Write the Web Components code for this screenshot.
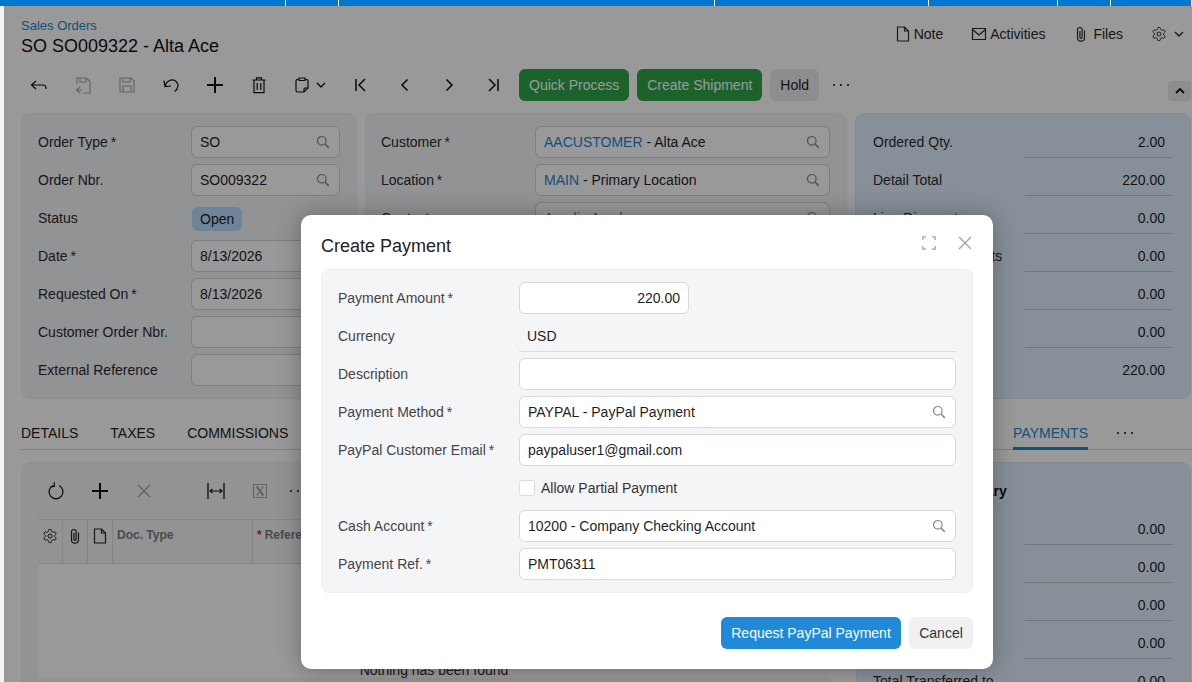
<!DOCTYPE html>
<html lang="en">
<head>
<meta charset="utf-8">
<title>Sales Orders</title>
<style>
    html, body { margin: 0; height: 100%; overflow: hidden; background: #fff; }
    body { font: 14px "Liberation Sans", Arial, sans-serif; color: #222; }
</style>
</head>
<body>
<sales-order-screen></sales-order-screen>
<script>
const ICONS = {
    search: [14, '<circle cx="5.8" cy="5.8" r="4.3"/><path d="M9 9l3.8 3.8" stroke-width="1.7"/>'],
    back: [18, '<path d="M6 5L1.500 9 6 13M1.500 9H13q3 0 3 3v1"/>'],
    saveback: [18, '<path d="M3 8V2h9.500L16 5.500V17H9M6 2v4h6V2"/><path d="M6 11l-3.500 3L6 17M2.500 14H8"/>'],
    save: [18, '<path d="M2 2h11l3 3v11H2zM5 2v4h7V2M5 16v-6h8v6"/>'],
    undo: [18, '<path d="M3 10C4.500 4.500 10 2.500 13.500 5c3.800 2.800 3 8-1 10.500"/><path d="M2 4.500l1 6 6-.5"/>'],
    plus: [16, '<path d="M8 0v16M0 8h16" stroke-width="2"/>'],
    trash: [18, '<path d="M2.500 4h13M6.500 4V1.800h5V4M4 4v12.600h10V4M7.200 7v7M10.800 7v7"/>'],
    clipboard: [16, '<path d="M4.500 2.500h-1Q2 2.500 2 4v9.500Q2 15 3.500 15H10l4-4V4q0-1.500-1.500-1.500h-1M5 1h6v2.500H5zM10 15v-3q0-1 1-1h3"/>'],
    chevdown: [10, '<path d="M1 3l4 4 4-4" stroke-width="1.400"/>'],
    chevup: [10, '<path d="M1 7l4-4 4 4" stroke-width="1.800"/>'],
    first: [14, '<path d="M2 1v12M11 1L5 7l6 6" stroke-width="1.500"/>'],
    prev: [14, '<path d="M9.500 1.500L4 7l5.500 5.500" stroke-width="1.500"/>'],
    next: [14, '<path d="M4.500 1.500L10 7l-5.500 5.500" stroke-width="1.500"/>'],
    last: [14, '<path d="M12 1v12M3 1l6 6-6 6" stroke-width="1.500"/>'],
    note: [16, '<path d="M2.500 1h7L13.500 5v10h-11zM9.500 1v4h4"/>'],
    mail: [16, '<path d="M1.500 2.500h13v11h-13zM1.500 3.500L8 9l6.500-5.500"/>'],
    clip: [16, '<path d="M11.500 4.500v7.200a3.500 3.500 0 0 1-7 0V3.800a2.300 2.300 0 0 1 4.600 0v7.500a1.100 1.100 0 0 1-2.200 0V5"/>'],
    gear: [24, '<path d="M12.220 2h-.44a2 2 0 0 0-2 2v.18a2 2 0 0 1-1 1.730l-.43.25a2 2 0 0 1-2 0l-.15-.08a2 2 0 0 0-2.730.73l-.22.38a2 2 0 0 0 .73 2.730l.15.1a2 2 0 0 1 1 1.720v.51a2 2 0 0 1-1 1.740l-.15.09a2 2 0 0 0-.73 2.730l.22.38a2 2 0 0 0 2.730.73l.15-.08a2 2 0 0 1 2 0l.43.25a2 2 0 0 1 1 1.730V20a2 2 0 0 0 2 2h.44a2 2 0 0 0 2-2v-.18a2 2 0 0 1 1-1.730l.43-.25a2 2 0 0 1 2 0l.15.08a2 2 0 0 0 2.730-.73l.22-.39a2 2 0 0 0-.73-2.730l-.15-.08a2 2 0 0 1-1-1.740v-.5a2 2 0 0 1 1-1.740l.15-.09a2 2 0 0 0 .73-2.730l-.22-.38a2 2 0 0 0-2.730-.73l-.15.08a2 2 0 0 1-2 0l-.43-.25a2 2 0 0 1-1-1.730V4a2 2 0 0 0-2-2z" stroke-width="1.500"/><circle cx="12" cy="12" r="3" stroke-width="1.500"/>'],
    refresh: [18, '<path d="M6 3.500a7 7 0 1 0 6 0"/><path d="M6 .5l.5 4-3.800.8" transform="translate(1 -.3)"/>'],
    close: [14, '<path d="M1 1l12 12M13 1L1 13" stroke-width="1.400"/>'],
    expand: [14, '<path d="M4 .8H.8V4M10 .8h3.200V4M4 13.200H.8V10M10 13.200h3.200V10" stroke-width="1.300"/>'],
    fit: [18, '<path d="M1 1v16M17 1v16" stroke-width="1.300"/><path d="M3 9h12M5.500 6.800L3 9l2.500 2.200M12.500 6.800L15 9l-2.500 2.200" stroke-width="1.100"/>'],
    excel: [16, '<path d="M1.500 1.500h13v13h-13z"/><path d="M5 4l6 8" stroke-width="2.200"/><path d="M11 4l-6 8"/><path d="M4 4h2.500M9.500 4H12M4 12h2.500M9.500 12H12" stroke-width=".8"/>']
};

class AppIcon extends HTMLElement {
    connectedCallback() {
        const [box, body] = ICONS[this.getAttribute('name')];
        const size = this.getAttribute('size') || box;
        const root = this.shadowRoot || this.attachShadow({ mode: 'open' });
        root.innerHTML = `
        <style>
            :host { display: inline-flex; line-height: 0; color: inherit; }
            svg { fill: none; stroke: currentColor; stroke-width: 1.2; }
        </style>
        <svg width="${size}" height="${size}" viewBox="0 0 ${box} ${box}">${body}</svg>`;
    }
}

class TopBar extends HTMLElement {
    constructor() {
        super();
        const widths = [286, 53, 376, 214, 129, 53, 81];
        this.attachShadow({ mode: 'open' }).innerHTML = `
        <style>
            :host { display: flex; height: 6px; background: #0078d0; }
            i { display: block; border-right: 1px solid #fff; }
        </style>
        ${widths.map(w => `<i style="width:${w - 1}px"></i>`).join('')}`;
    }
}

class PageHead extends HTMLElement {
    constructor() {
        super();
        this.attachShadow({ mode: 'open' }).innerHTML = `
        <style>
            :host { display: flex; justify-content: space-between; height: 63px; padding-left: 17px; box-sizing: border-box; }
            .crumb { font-size: 13px; line-height: 15px; color: #1c86d1; margin-top: 12px; }
            h1 { margin: 2px 0 0; font-size: 18px; font-weight: 400; line-height: 22px; color: #111; }
            .actions { display: flex; align-items: center; height: 56px; color: #2a2a2a; padding-right: 8px; }
            .action { display: flex; align-items: center; gap: 3px; }
            .note { margin-right: 28px; }
            .activities { margin-right: 28px; }
            .files { margin-right: 28px; gap: 4px; }
            .settings { gap: 7px; }
        </style>
        <div>
            <div class="crumb">Sales Orders</div>
            <h1>SO SO009322 - Alta Ace</h1>
        </div>
        <div class="actions">
            <span class="action note"><app-icon name="note"></app-icon>Note</span>
            <span class="action activities"><app-icon name="mail"></app-icon>Activities</span>
            <span class="action files"><app-icon name="clip"></app-icon>Files</span>
            <span class="action settings"><app-icon name="gear" size="16"></app-icon><app-icon name="chevdown"></app-icon></span>
        </div>`;
    }
}

class DotsMark extends HTMLElement {
    constructor() {
        super();
        this.attachShadow({ mode: 'open' }).innerHTML = `
        <style>
            :host { display: inline-flex; gap: 5px; flex: none; }
            i { width: 2px; height: 2px; background: #111; border-radius: 50%; }
        </style>
        <i></i><i></i><i></i>`;
    }
}

class ToolBtn extends HTMLElement {
    connectedCallback() {
        const root = this.shadowRoot || this.attachShadow({ mode: 'open' });
        const name = this.getAttribute('icon');
        root.innerHTML = `
        <style>
            :host { display: inline-flex; align-items: center; justify-content: center; gap: 6px; width: 44px; height: 32px; color: #111; flex: none; }
            :host([disabled]) { color: #a8a8a8; }
            :host([wide]) { width: 58px; }
        </style>
        ${name === 'more' ? '<dots-mark></dots-mark>' : `<app-icon name="${name}"></app-icon>`}
        ${this.hasAttribute('wide') ? '<app-icon name="chevdown"></app-icon>' : ''}`;
    }
}

class ActionBtn extends HTMLElement {
    constructor() {
        super();
        this.attachShadow({ mode: 'open' }).innerHTML = `
        <style>
            :host { display: inline-flex; align-items: center; height: 32px; padding: 0 10px; border-radius: 6px; white-space: nowrap; background: #ececec; color: #222; flex: none; }
            :host([kind="green"]) { background: #2da548; color: #fff; }
            :host([kind="blue"]) { background: #208ad8; color: #fff; }
            :host([kind="light"]) { background: #f0f0f0; color: #333; }
        </style>
        <slot></slot>`;
    }
}

class MainToolbar extends HTMLElement {
    constructor() {
        super();
        this.attachShadow({ mode: 'open' }).innerHTML = `
        <style>
            :host { display: flex; align-items: center; height: 32px; margin-left: 13px; margin-right: 1px; }
            .acts { display: flex; gap: 8px; margin-left: 4px; }
            .collapse { margin-left: auto; align-self: flex-end; width: 23px; height: 20px; border-radius: 4px; background: #ececec; color: #111; display: flex; align-items: center; justify-content: center; }
        </style>
        <tool-btn icon="back"></tool-btn>
        <tool-btn icon="saveback" disabled></tool-btn>
        <tool-btn icon="save" disabled></tool-btn>
        <tool-btn icon="undo"></tool-btn>
        <tool-btn icon="plus"></tool-btn>
        <tool-btn icon="trash"></tool-btn>
        <tool-btn icon="clipboard" wide></tool-btn>
        <tool-btn icon="first"></tool-btn>
        <tool-btn icon="prev"></tool-btn>
        <tool-btn icon="next"></tool-btn>
        <tool-btn icon="last"></tool-btn>
        <div class="acts">
            <action-btn kind="green">Quick Process</action-btn>
            <action-btn kind="green">Create Shipment</action-btn>
            <action-btn>Hold</action-btn>
        </div>
        <tool-btn icon="more"></tool-btn>
        <div class="collapse"><app-icon name="chevup"></app-icon></div>`;
    }
}

class TextBox extends HTMLElement {
    connectedCallback() {
        const root = this.shadowRoot || this.attachShadow({ mode: 'open' });
        const link = this.getAttribute('link');
        root.innerHTML = `
        <style>
            :host { display: flex; align-items: center; justify-content: space-between; box-sizing: border-box; height: 32px; padding: 0 9px 0 8px; border: 1px solid var(--box-border, #d0d2d6); border-radius: 6px; background: #fff; color: #1f1f1f; white-space: nowrap; min-width: 0; }
            :host([right]) { justify-content: flex-end; padding-right: 8px; }
            :host([narrow]) { width: 170px; }
            .link { color: #1c86d1; }
            app-icon { color: #8c8c8c; flex: none; }
        </style>
        <span>${link ? `<span class="link">${link}</span>` : ''}${this.getAttribute('value') || ''}</span>
        ${this.hasAttribute('lookup') ? '<app-icon name="search"></app-icon>' : ''}`;
    }
}

class FormField extends HTMLElement {
    connectedCallback() {
        const root = this.shadowRoot || this.attachShadow({ mode: 'open' });
        const label = this.getAttribute('label') || '';
        root.innerHTML = `
        <style>
            :host { display: grid; grid-template-columns: var(--label-w, 153px) minmax(0, 1fr); align-items: center; height: 32px; }
            .l { color: var(--label-color, #2b2b2b); white-space: nowrap; margin-left: var(--label-shift, 0); }
            .star { margin-left: -1px; }
        </style>
        <span class="l">${label}${this.hasAttribute('required') ? ' <span class="star">*</span>' : ''}</span>
        <slot></slot>`;
    }
}

class TotalRow extends HTMLElement {
    connectedCallback() {
        const root = this.shadowRoot || this.attachShadow({ mode: 'open' });
        root.innerHTML = `
        <style>
            :host { display: grid; grid-template-columns: 1fr 148px; align-items: stretch; height: 32px; color: #2b2b2b; }
            .l, .v { display: flex; align-items: center; }
            .l { white-space: nowrap; }
            .v { justify-content: flex-end; padding-right: 8px; border-bottom: 1px solid #bcc7cf; color: #1f1f1f; }
            :host([last]) .v { border-bottom-color: transparent; }
        </style>
        <span class="l">${this.getAttribute('label') || ''}</span>
        <span class="v">${this.getAttribute('value')}</span>`;
    }
}

class FormPanel extends HTMLElement {
    constructor() {
        super();
        this.attachShadow({ mode: 'open' }).innerHTML = `
        <style>
            :host { display: flex; flex-direction: column; gap: 6px; box-sizing: border-box; padding: 12px 16px; border: 1px solid #eceef1; border-radius: 10px; background: #f3f5f8; min-width: 0; }
            :host([blue]) { background: #e1f1ff; border-color: #d6e8f7; padding-right: 17px; padding-left: 17px; }
        </style>
        <slot></slot>`;
    }
}

class TabBar extends HTMLElement {
    constructor() {
        super();
        this.attachShadow({ mode: 'open' }).innerHTML = `
        <style>
            :host { display: flex; gap: 32px; height: 33px; margin: 18px 0 0 17px; box-sizing: border-box; border-bottom: 1px solid #d8d8d8; color: #222; }
            span { display: flex; align-items: center; box-sizing: border-box; height: 32px; }
            .on { color: #1c86d1; height: 33px; border-bottom: 3px solid #1c86d1; padding-top: 2px; }
            .fill { flex: 1; }
            .more { margin-right: 59px; margin-left: -3px; }
        </style>
        <span>DETAILS</span><span>TAXES</span><span>COMMISSIONS</span>
        <span class="fill"></span>
        <span class="on">PAYMENTS</span>
        <span class="more"><dots-mark></dots-mark></span>`;
    }
}

class PaymentsGrid extends HTMLElement {
    constructor() {
        super();
        this.attachShadow({ mode: 'open' }).innerHTML = `
        <style>
            :host { display: block; box-sizing: border-box; width: 809px; height: 260px; padding: 8px 0 0 12px; border: 1px solid #eceef1; border-right: 0; border-radius: 10px 0 0 0; background: #f3f5f8; }
            .bar { display: flex; align-items: center; height: 40px; }
            .gap { width: 28px; }
            .bar .tail { margin-left: -6px; }
            .table { margin: 8px 0 0 4px; }
            .head { display: grid; grid-template-columns: 25px 25px 25px 140px 1fr; height: 45px; box-sizing: border-box; border-top: 1px solid #dcdee2; border-bottom: 1px solid #dcdee2; font-size: 12px; font-weight: 700; }
            .head > div { display: flex; justify-content: center; padding-top: 8px; box-sizing: border-box; border-right: 1px solid #dcdee2; color: #222; }
            .head > .t { justify-content: flex-start; padding: 8px 0 0 4px; color: #7c7c7c; line-height: 14px; }
            .head > .t:last-child { border-right: 0; }
            .req { color: #d62c2c; margin-right: 3px; }
            .body { height: 114px; background: #fff; display: flex; justify-content: center; align-items: flex-end; color: #2b2b2b; line-height: 16px; }
        </style>
        <div class="bar">
            <tool-btn icon="refresh"></tool-btn>
            <tool-btn icon="plus"></tool-btn>
            <tool-btn icon="close" disabled></tool-btn>
            <span class="gap"></span>
            <tool-btn icon="fit"></tool-btn>
            <tool-btn icon="excel" disabled></tool-btn>
            <tool-btn class="tail" icon="more"></tool-btn>
        </div>
        <div class="table">
            <div class="head">
                <div><app-icon name="gear" size="16"></app-icon></div>
                <div><app-icon name="clip" size="16"></app-icon></div>
                <div><app-icon name="note" size="16"></app-icon></div>
                <div class="t">Doc. Type</div>
                <div class="t"><span class="req">*</span>Reference Nbr.</div>
            </div>
            <div class="body">Nothing has been found</div>
        </div>`;
    }
}

class PaymentSummary extends HTMLElement {
    constructor() {
        super();
        this.attachShadow({ mode: 'open' }).innerHTML = `
        <style>
            :host { display: block; box-sizing: border-box; width: 335px; height: 260px; padding: 18px 17px 0 16px; border: 1px solid #d6e8f7; border-bottom: 0; border-radius: 10px 10px 0 0; background: #e1f1ff; }
            h2 { margin: 0 0 12px; font-size: 14px; line-height: 20px; font-weight: 700; color: #111; white-space: nowrap; }
            .rows { display: flex; flex-direction: column; gap: 6px; }
        </style>
        <h2>Payments Summary</h2>
        <div class="rows">
            <total-row value="0.00"></total-row>
            <total-row value="0.00"></total-row>
            <total-row value="0.00"></total-row>
            <total-row value="0.00"></total-row>
            <total-row label="Total Transferred to" value="0.00"></total-row>
        </div>`;
    }
}

class CreatePaymentDialog extends HTMLElement {
    constructor() {
        super();
        this.attachShadow({ mode: 'open' }).innerHTML = `
        <style>
            :host { position: absolute; left: 297px; top: 209px; width: 692px; height: 454px; box-sizing: border-box; padding: 0 20px; background: #fff; border-radius: 10px; box-shadow: 0 0 24px rgba(0,0,0,.3); --label-w: 181px; --label-color: #444; --box-border: #d6d8dc; }
            header { display: flex; align-items: center; height: 54px; }
            h3 { margin: 8px 0 0; font-size: 18px; font-weight: 400; color: #222; line-height: 22px; flex: 1; }
            .ctl { display: flex; gap: 22px; color: #a4a4a4; margin: 2px 1px 0 0; }
            form-panel { background: #f4f5f7; border-color: #eceef0; border-radius: 8px; }
            .currency { display: flex; align-items: center; height: 31px; padding-left: 8px; border-bottom: 1px solid #d8dadd; color: #1f1f1f; }
            .check { display: flex; align-items: center; gap: 6px; color: #333; }
            .box { width: 14px; height: 14px; background: #fff; border: 1px solid #dcdee1; border-radius: 3px; }
            footer { display: flex; justify-content: flex-end; gap: 8px; margin-top: 24px; }
            action-btn[kind="blue"] { width: 180px; box-sizing: border-box; justify-content: center; padding: 0; }
            action-btn[kind="light"] { width: 64px; box-sizing: border-box; justify-content: center; padding: 0; }
        </style>
        <header>
            <h3>Create Payment</h3>
            <div class="ctl"><app-icon name="expand"></app-icon><app-icon name="close"></app-icon></div>
        </header>
        <form-panel>
            <form-field label="Payment Amount" required><text-box right narrow value="220.00"></text-box></form-field>
            <form-field label="Currency"><div class="currency">USD</div></form-field>
            <form-field label="Description"><text-box></text-box></form-field>
            <form-field label="Payment Method" required><text-box lookup value="PAYPAL - PayPal Payment"></text-box></form-field>
            <form-field label="PayPal Customer Email" required><text-box value="paypaluser1@gmail.com"></text-box></form-field>
            <form-field><div class="check"><span class="box"></span>Allow Partial Payment</div></form-field>
            <form-field label="Cash Account" required><text-box lookup value="10200 - Company Checking Account"></text-box></form-field>
            <form-field label="Payment Ref." required><text-box value="PMT06311"></text-box></form-field>
        </form-panel>
        <footer>
            <action-btn kind="blue">Request PayPal Payment</action-btn>
            <action-btn kind="light">Cancel</action-btn>
        </footer>`;
    }
}

class SalesOrderScreen extends HTMLElement {
    constructor() {
        super();
        this.attachShadow({ mode: 'open' }).innerHTML = `
        <style>
            :host { display: block; height: 682px; overflow: hidden; background: #f3f5f9; }
            .frame { position: relative; height: 676px; margin-left: 4px; background: #fff; overflow: hidden; }
            .panels { display: grid; grid-template-columns: 336px 482px 336px; gap: 8px; margin: 12px 0 0 17px; height: 286px; }
            .mid { --label-shift: -1px; }
            .badge { display: inline-flex; align-items: center; height: 24px; width: fit-content; padding: 0 8px; margin: 2px 0 0 1px; border-radius: 6px; background: #b8dcff; }
            .lower { display: flex; gap: 26px; margin: 12px 0 0 17px; }
            .shade { position: absolute; inset: 0; background: rgba(0,0,0,.4); }
        </style>
        <top-bar></top-bar>
        <div class="frame">
            <page-head></page-head>
            <main-toolbar></main-toolbar>
            <div class="panels">
                <form-panel>
                    <form-field label="Order Type" required><text-box lookup value="SO"></text-box></form-field>
                    <form-field label="Order Nbr."><text-box lookup value="SO009322"></text-box></form-field>
                    <form-field label="Status"><span class="badge">Open</span></form-field>
                    <form-field label="Date" required><text-box value="8/13/2026"></text-box></form-field>
                    <form-field label="Requested On" required><text-box value="8/13/2026"></text-box></form-field>
                    <form-field label="Customer Order Nbr."><text-box></text-box></form-field>
                    <form-field label="External Reference"><text-box></text-box></form-field>
                </form-panel>
                <form-panel class="mid">
                    <form-field label="Customer" required><text-box lookup link="AACUSTOMER" value=" - Alta Ace"></text-box></form-field>
                    <form-field label="Location" required><text-box lookup link="MAIN" value=" - Primary Location"></text-box></form-field>
                    <form-field label="Contact"><text-box lookup link="Aurelio Asad"></text-box></form-field>
                </form-panel>
                <form-panel blue>
                    <total-row label="Ordered Qty." value="2.00"></total-row>
                    <total-row label="Detail Total" value="220.00"></total-row>
                    <total-row label="Line Discounts" value="0.00"></total-row>
                    <total-row label="Document Discounts" value="0.00"></total-row>
                    <total-row value="0.00"></total-row>
                    <total-row value="0.00"></total-row>
                    <total-row value="220.00" last></total-row>
                </form-panel>
            </div>
            <tab-bar></tab-bar>
            <div class="lower">
                <payments-grid></payments-grid>
                <payment-summary></payment-summary>
            </div>
            <div class="shade"><create-payment-dialog></create-payment-dialog></div>
        </div>`;
    }
}

customElements.define('app-icon', AppIcon);
customElements.define('top-bar', TopBar);
customElements.define('page-head', PageHead);
customElements.define('dots-mark', DotsMark);
customElements.define('tool-btn', ToolBtn);
customElements.define('action-btn', ActionBtn);
customElements.define('main-toolbar', MainToolbar);
customElements.define('text-box', TextBox);
customElements.define('form-field', FormField);
customElements.define('total-row', TotalRow);
customElements.define('form-panel', FormPanel);
customElements.define('tab-bar', TabBar);
customElements.define('payments-grid', PaymentsGrid);
customElements.define('payment-summary', PaymentSummary);
customElements.define('create-payment-dialog', CreatePaymentDialog);
customElements.define('sales-order-screen', SalesOrderScreen);
</script>
</body>
</html>
